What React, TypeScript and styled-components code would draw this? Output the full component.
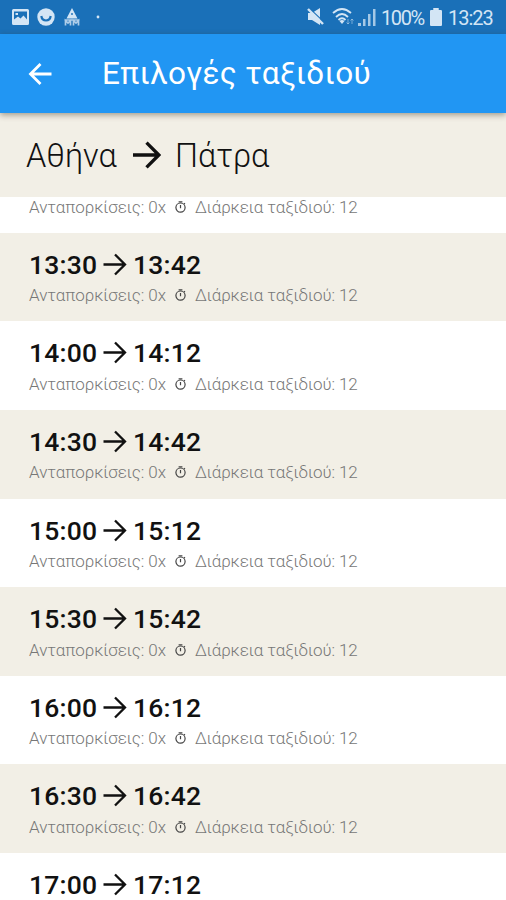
import React from 'react';
import styled, { createGlobalStyle } from 'styled-components';

const GlobalStyle = createGlobalStyle`
  * { box-sizing: border-box; }
  html, body { margin: 0; height: 900px; overflow: hidden; background: #fff; }
  body { font-family: Roboto, "Noto Sans", sans-serif; }
`;

const Screen = styled.main`
  width: 506px;
  height: 900px;
  display: flex;
  flex-direction: column;
  overflow: hidden;
  background: #fff;
`;

const StatusBar = styled.div`
  height: 34px;
  flex: none;
  display: flex;
  align-items: center;
  justify-content: space-between;
  padding: 0 12px;
  background: #1a70b8;
  color: #d3e5f5;
`;

const StatusGroup = styled.div`
  display: flex;
  align-items: center;
`;

const StatusIcon = styled.svg<{ $gap?: number }>`
  display: block;
  flex: none;
  margin-right: ${({ $gap = 0 }) => $gap}px;
`;

const StatusText = styled.span<{ $width: number; $tracking: number }>`
  width: ${({ $width }) => $width}px;
  font-size: 20px;
  line-height: 34px;
  letter-spacing: ${({ $tracking }) => $tracking}px;
  padding-top: 1px;
  white-space: nowrap;
`;

const AppBar = styled.header`
  height: 79px;
  flex: none;
  display: flex;
  align-items: center;
  padding: 0 28px;
  background: #2196f3;
  color: #fff;
  position: relative;
  z-index: 2;
  box-shadow: 0 2px 6px rgba(60, 50, 30, 0.45);
`;

const BackButton = styled.button`
  display: flex;
  padding: 0;
  border: 0;
  background: none;
  color: inherit;
  margin-right: 50px;
`;

const Title = styled.h1`
  margin: 0;
  font-size: 31.5px;
  font-weight: 400;
  line-height: 40px;
  letter-spacing: 0.38px;
  white-space: nowrap;
`;

const RouteHeader = styled.section`
  height: 84px;
  flex: none;
  display: flex;
  align-items: center;
  padding: 0 26px;
  background: #f2efe6;
  color: #111;
`;

const City = styled.span<{ $width: number }>`
  width: ${({ $width }) => $width}px;
  font-size: 32.5px;
  font-weight: 300;
  line-height: 40px;
  padding-top: 1px;
  white-space: nowrap;
`;

const RouteArrow = styled.svg`
  flex: none;
  margin-right: 14px;
`;

const TripList = styled.div`
  flex: 1;
  min-height: 0;
  overflow: hidden;
  display: flex;
  flex-direction: column;
`;

const Trip = styled.article<{ $shaded: boolean }>`
  height: 88.55px;
  flex: none;
  padding: 14.5px 29px 0;
  background: ${({ $shaded }) => ($shaded ? '#f2efe6' : '#fff')};
`;

const ScrolledTrip = styled.article`
  height: 35.9px;
  flex: none;
  display: flex;
  align-items: flex-start;
  padding: 0 29px;
  background: #fff;
`;

const Times = styled.div`
  height: 34px;
  display: flex;
  align-items: center;
  font-size: 26.5px;
  font-weight: 500;
  color: #111;
`;

const Time = styled.span`
  width: 74px;
  letter-spacing: 0.2px;
  white-space: nowrap;
`;

const TimeArrow = styled.svg`
  flex: none;
  margin: 1px 6px 0 0;
`;

const Details = styled.div<{ $height?: number }>`
  height: ${({ $height = 28 }) => $height}px;
  display: flex;
  align-items: center;
  font-size: 17px;
  font-weight: 300;
  letter-spacing: -0.08px;
  color: #777;
  white-space: nowrap;
`;

const Transfers = styled.span`
  width: 145px;
`;

const Timer = styled.svg`
  flex: none;
  margin-right: 8px;
`;

const Duration = styled.span`
  width: 170px;
`;

const departures = ['13:30', '14:00', '14:30', '15:00', '15:30', '16:00', '16:30', '17:00'];

const arrivalFor = (departure: string) =>
  departure.slice(0, 3) + String(Number(departure.slice(3)) + 12);

function TripDetails({ height }: { height?: number }) {
  return (
    <Details $height={height}>
      <Transfers>Ανταπορκίσεις: 0x</Transfers>
      <Timer width="13" height="14" viewBox="0 0 13 14" fill="none" stroke="#444" strokeWidth="1.2">
        <circle cx="6.5" cy="7.6" r="4.6" />
        <path d="M4.6 1.8H8.4M6.5 5V8.2M9.9 4.1L11 3.1" />
      </Timer>
      <Duration>Διάρκεια ταξιδιού: 12</Duration>
    </Details>
  );
}

function TripRow({ departure, shaded }: { departure: string; shaded: boolean }) {
  return (
    <Trip $shaded={shaded}>
      <Times>
        <Time>{departure}</Time>
        <TimeArrow width="24" height="24" viewBox="0 0 24 24" fill="none" stroke="#111" strokeWidth="2.3">
          <path d="M0.5 11.5H22M12 1.5L22 11.5L12 21.5" />
        </TimeArrow>
        <Time>{arrivalFor(departure)}</Time>
      </Times>
      <TripDetails />
    </Trip>
  );
}

export default function App() {
  return (
    <Screen>
      <GlobalStyle />
      <StatusBar>
        <StatusGroup>
          <StatusIcon $gap={8} width="17" height="16" viewBox="0 0 17 16">
            <path fill="currentColor" fillRule="evenodd" d="M1.5 0H15.5Q17 0 17 1.5V14.5Q17 16 15.5 16H1.5Q0 16 0 14.5V1.5Q0 0 1.5 0ZM2 2.5V10.5L6 7.5L8.5 9.5L11.5 6.5L15 10.5V2.5ZM3.5 4H6V6H3.5Z" />
          </StatusIcon>
          <StatusIcon $gap={9} width="18" height="18" viewBox="0 0 18 18">
            <circle cx="9" cy="9" r="8.7" fill="currentColor" />
            <path d="M4.3 8Q5 12.5 9 12.5T13.7 8" fill="none" stroke="#1a70b8" strokeWidth="2.2" />
          </StatusIcon>
          <StatusIcon $gap={16} width="16" height="18" viewBox="0 0 16 18">
            <path fill="currentColor" fillRule="evenodd" d="M8 0L13.5 10.5H2.5ZM7.3 5V7H8.7V5Z" />
            <path d="M1.5 17.5V12.5L4 15L6.5 12.5V17.5M9.5 17.5V12.5L12 15L14.5 12.5V17.5M0.5 12H15.5" fill="none" stroke="currentColor" strokeWidth="1.7" opacity=".8" />
          </StatusIcon>
          <StatusIcon width="4" height="4" viewBox="0 0 4 4">
            <circle cx="2" cy="2" r="1.4" fill="currentColor" />
          </StatusIcon>
        </StatusGroup>
        <StatusGroup>
          <StatusIcon $gap={8} width="17" height="18" viewBox="0 0 17 18">
            <path d="M1 5H5L13 0V17L5 12H1Z" fill="currentColor" />
            <path d="M2.5 0.5L17.5 14.5" stroke="#1a70b8" strokeWidth="1.2" />
            <path d="M1 1L16 16" stroke="currentColor" strokeWidth="2.4" />
          </StatusIcon>
          <StatusIcon $gap={3} width="23" height="19" viewBox="0 0 23 19" fill="none" stroke="currentColor" strokeWidth="1.8">
            <path d="M1 5Q10 -3 19 5M4 9Q10 3 16 9M6.5 12Q10 8.5 13.5 12" />
            <path d="M7.5 13Q10 11 12.5 13L10 16Z" fill="currentColor" stroke="none" />
            <path d="M16 11V16M14.5 14.5L16 16L17.5 14.5M20 16V11M18.5 12.5L20 11L21.5 12.5" strokeWidth="1" opacity=".5" />
          </StatusIcon>
          <StatusIcon $gap={5} width="18" height="18" viewBox="0 0 18 18" fill="currentColor">
            <path d="M0 15H3V18H0ZM5 11H7.5V18H5ZM10 6H12.5V18H10ZM15 1H17.5V18H15Z" opacity=".75" />
          </StatusIcon>
          <StatusText $width={49} $tracking={-1.4}>100%</StatusText>
          <StatusIcon $gap={6} width="12" height="18" viewBox="0 0 11 18" preserveAspectRatio="none">
            <path fill="currentColor" d="M3 0H8V2H10Q11 2 11 3V17Q11 18 10 18H1Q0 18 0 17V3Q0 2 1 2H3Z" />
          </StatusIcon>
          <StatusText $width={46} $tracking={-1}>13:23</StatusText>
        </StatusGroup>
      </StatusBar>
      <AppBar>
        <BackButton aria-label="Πίσω">
          <svg width="24" height="24" viewBox="0 0 24 24" fill="none" stroke="currentColor" strokeWidth="2.8">
            <path d="M23.5 12H2.5M12.5 2L2.5 12L12.5 22" />
          </svg>
        </BackButton>
        <Title>Επιλογές ταξιδιού</Title>
      </AppBar>
      <RouteHeader>
        <City $width={107}>Αθήνα</City>
        <RouteArrow width="28" height="28" viewBox="0 0 28 28" fill="none" stroke="#111" strokeWidth="3.3">
          <path d="M0 14H25M13.5 1.7L25.8 14L13.5 26.3" />
        </RouteArrow>
        <City $width={100}>Πάτρα</City>
      </RouteHeader>
      <TripList>
        <ScrolledTrip>
          <TripDetails height={20} />
        </ScrolledTrip>
        {departures.map((departure, index) => (
          <TripRow key={departure} departure={departure} shaded={index % 2 === 0} />
        ))}
      </TripList>
    </Screen>
  );
}
